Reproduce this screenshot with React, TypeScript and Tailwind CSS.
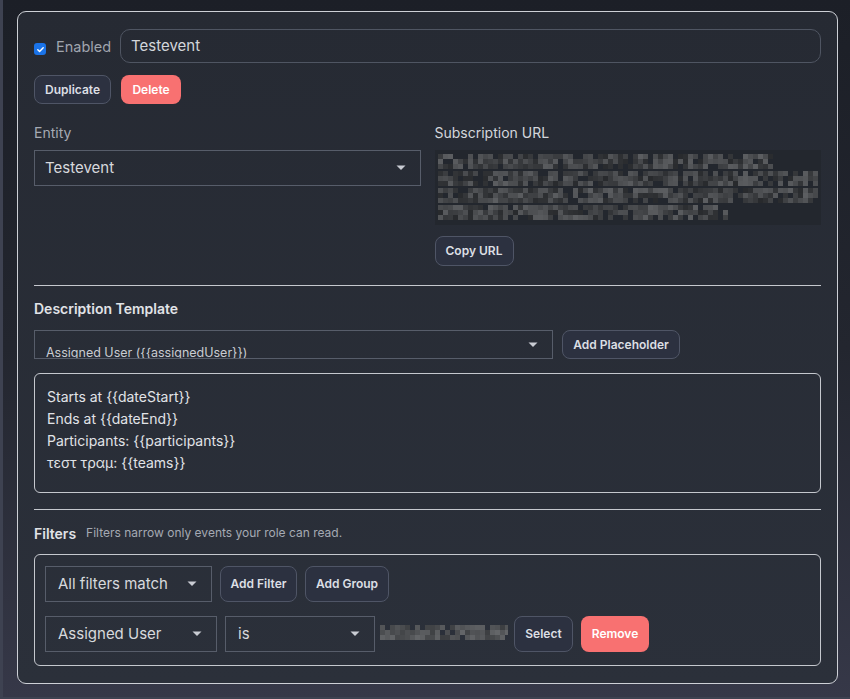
import type { JSX } from "react";

// deterministic pseudo random so the pixelated blur stays the same every render
const rng = (seed: number) => () => {
  seed = (seed * 1103515245 + 12345) & 0x7fffffff;
  return seed / 0x7fffffff;
};

const Pixelated = ({ w, h, rows, cell, seed, lo, hi }: { w: number; h: number; rows: { y: number; end: number }[]; cell: number; seed: number; lo: number; hi: number }): JSX.Element => {
  const r = rng(seed);
  const rects: JSX.Element[] = [];
  rows.forEach((row, ri) => {
    for (let x = 2; x < row.end; x += cell) {
      for (let yy = 0; yy < 3; yy++) {
        const v = r();
        if (v < 0.15) continue;
        const g = Math.round(lo + r() * (hi - lo));
        rects.push(
          <rect key={`${ri}-${x}-${yy}`} x={x} y={row.y + yy * cell} width={cell} height={cell} fill={`rgb(${g},${g + 2},${g + 5})`} />
        );
      }
    }
  });
  return (
    <svg width={w} height={h} className="block">
      {rects}
    </svg>
  );
};

const Caret = () => (
  <svg width="10" height="6" viewBox="0 0 10 6" className="shrink-0">
    <path d="M0.5 0.5h9L5 5z" fill="#c9ccd3" />
  </svg>
);

const Btn = ({ children, className = "" }: { children: React.ReactNode; className?: string }) => (
  <button className={`flex items-center justify-center rounded-[8px] border border-[#4f5566] bg-[#2c3140] text-[12px] font-semibold text-[#dcdfe4] ${className}`}>
    {children}
  </button>
);

const Select = ({ label, className = "" }: { label: string; className?: string }) => (
  <div className={`flex items-center justify-between border border-[#575d6a] pl-[12px] pr-[14px] text-[15px] text-[#d7d9dd] ${className}`}>
    <span>{label}</span>
    <Caret />
  </div>
);

export default function App(): JSX.Element {
  return (
    <div
      className="h-[699px] overflow-hidden border-l-[3px] border-b-2 border-[#3e4251] bg-gradient-to-b from-[#1c1f27] via-[#23262f] to-[#363848] pl-[14px] pr-[12px] pt-[11px]"
      style={{ fontFamily: "Inter, 'Noto Sans', sans-serif" }}
    >
      <div className="rounded-[9px] border border-[#cdd0d6] bg-gradient-to-b from-[#262a33] to-[#2b303a] px-4 pt-[17px] pb-[17px]">
        {/* name row */}
        <div className="flex items-center">
          <span className="mt-[6px] flex h-[12px] w-[12px] shrink-0 items-center justify-center rounded-[3px] bg-[#1a73e8]">
            <svg width="9" height="9" viewBox="0 0 10 10">
              <path d="M2 5.2l2 2L8 3" stroke="white" strokeWidth="1.6" fill="none" strokeLinecap="round" strokeLinejoin="round" />
            </svg>
          </span>
          <span className="ml-[10px] mt-[2px] w-[54px] whitespace-nowrap text-[14.5px] text-[#a0a5ae]">Enabled</span>
          <div className="ml-[10px] flex h-[34px] flex-1 items-center rounded-[10px] border border-[#4f5562] px-[10px] text-[15px] text-[#d3d6db]">
            Testevent
          </div>
        </div>

        <div className="mt-3 flex gap-[10px]">
          <Btn className="h-[29px] w-[77px]">Duplicate</Btn>
          <button className="h-[29px] w-[60px] rounded-[8px] bg-[#f87171] text-[12px] font-semibold text-white">Delete</button>
        </div>

        <div className="mt-[19px] grid grid-cols-2 gap-[14px]">
          <div>
            <div className="h-5 text-[14px] leading-5 text-[#a5aab3]">Entity</div>
            <Select label="Testevent" className="mt-[7px] h-[36px] !pl-[10px] text-[14px]" />
          </div>
          <div>
            <div className="h-5 text-[14px] leading-5 text-[#d3d6db]">Subscription URL</div>
            <div className="mt-[7px] h-[75px] overflow-hidden bg-[#23272e] pl-[1px] pt-[1px]">
              <Pixelated
                w={386}
                h={73}
                cell={5}
                seed={7}
                lo={40}
                hi={92}
                rows={[
                  { y: 3, end: 335 },
                  { y: 20, end: 382 },
                  { y: 37, end: 382 },
                  { y: 54, end: 292 },
                ]}
              />
            </div>
            <Btn className="mt-[11px] h-[30px] w-[79px] text-[12.5px]">Copy URL</Btn>
          </div>
        </div>

        <div className="mt-[19px] h-px bg-[#c5c8ce]" />

        <div className="mt-[13px] h-5 text-[14px] font-semibold leading-5 text-[#e1e3e7]">Description Template</div>
        <div className="mt-[11px] flex gap-[9px]">
          <div className="flex h-[29px] w-[519px] items-center justify-between overflow-hidden border border-[#575d6a] pl-[11px] pr-[14px]">
            <span className="mt-[17px] text-[12.5px] text-[#c9ccd2]">Assigned User ({"{{assignedUser}}"})</span>
            <Caret />
          </div>
          <Btn className="h-[29px] w-[118px]">Add Placeholder</Btn>
        </div>

        <div className="mt-[14px] h-[120px] rounded-[6px] border border-[#c5c8ce] px-3 pt-3 text-[14px] leading-[22px] text-[#e1e3e7]">
          <div>Starts at {"{{dateStart}}"}</div>
          <div>Ends at {"{{dateEnd}}"}</div>
          <div>Participants: {"{{participants}}"}</div>
          <div>τεστ τραμ: {"{{teams}}"}</div>
        </div>

        <div className="mt-4 h-px bg-[#c5c8ce]" />

        <div className="mt-[13px] flex h-5 items-center gap-[10px]">
          <span className="text-[14px] font-semibold text-[#e1e3e7]">Filters</span>
          <span className="text-[12px] text-[#a5aab3]">Filters narrow only events your role can read.</span>
        </div>

        <div className="mt-[11px] rounded-[6px] border border-[#c5c8ce] pl-[10px] pt-[11px] pb-[13px]">
          <div className="flex gap-2">
            <Select label="All filters match" className="h-[36px] w-[167px]" />
            <Btn className="h-[36px] w-[77px]">Add Filter</Btn>
            <Btn className="h-[36px] w-[84px]">Add Group</Btn>
          </div>
          <div className="mt-[14px] flex items-center">
            <Select label="Assigned User" className="h-[36px] w-[172px]" />
            <Select label="is" className="ml-2 h-[36px] w-[150px]" />
            <div className="ml-[3px]">
              <Pixelated w={130} h={26} cell={5} seed={21} lo={60} hi={100} rows={[{ y: 4, end: 128 }]} />
            </div>
            <Btn className="ml-[6px] h-[36px] w-[59px] font-medium">Select</Btn>
            <button className="ml-2 h-[36px] w-[68px] rounded-[8px] bg-[#f87171] text-[12px] font-semibold text-white">Remove</button>
          </div>
        </div>
      </div>
    </div>
  );
}
